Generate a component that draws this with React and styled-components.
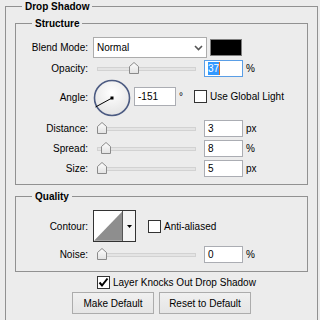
import styled, { createGlobalStyle } from "styled-components";

const GlobalStyle = createGlobalStyle`
  body {
    margin: 0;
    background: #ececec;
    font-family: "Liberation Sans", Arial, sans-serif;
    font-size: 10px;
    color: #000;
  }
`;

const Group = styled.fieldset`
  margin: ${(p) => p.$margin || "0"};
  padding: ${(p) => p.$padding || "0 8px"};
  border: 1px solid #919191;
  min-width: 0;
`;

const Legend = styled.legend`
  font-weight: bold;
  line-height: 13px;
  padding: 0 3px;
  margin-left: ${(p) => p.$indent || 8}px;
`;

const Row = styled.div`
  display: flex;
  align-items: center;
  height: ${(p) => p.$h || 20}px;
  margin-top: ${(p) => p.$top || 0}px;
`;

const Label = styled.div`
  width: 64px;
  flex: none;
  text-align: right;
  margin-right: 5px;
  margin-top: ${(p) => p.$top || 0}px;
`;

const Select = styled.div`
  width: 114px;
  height: 21px;
  box-sizing: border-box;
  background: #fff;
  border: 1px solid #acacac;
  display: flex;
  align-items: center;
  justify-content: space-between;
  padding: 0 3px 0 3px;
`;

const Swatch = styled.div`
  width: 32px;
  height: 17px;
  box-sizing: border-box;
  margin-left: 3px;
  background: #000;
  border: 1px solid #7f7f7f;
`;

const Slider = styled.div`
  position: relative;
  width: 99px;
  height: 12px;
  margin: 0 8px 0 4px;
  flex: none;
`;

const Track = styled.div`
  margin-top: 5px;
  height: 4px;
  box-sizing: border-box;
  background: #e4e4e4;
  border: 1px solid #d2d2d2;
`;

const Thumb = styled.svg`
  position: absolute;
  top: 0;
  left: ${(p) => p.$at}px;
`;

const Field = styled.div`
  width: ${(p) => p.$w || 39}px;
  height: ${(p) => p.$h || 17}px;
  box-sizing: border-box;
  background: #fff;
  border: 1px solid ${(p) => (p.$focus ? "#5a9ee6" : "#abadb3")};
  padding-left: 3px;
  display: flex;
  align-items: center;
  flex: none;
`;

const Selected = styled.span`
  background: #3399ff;
  color: #fff;
  line-height: 13px;
`;

const Caret = styled.span`
  width: 1px;
  height: 13px;
  background: #e07020;
`;

const Unit = styled.span`
  margin-left: 3px;
`;

const Box = styled.div`
  width: 13px;
  height: 13px;
  box-sizing: border-box;
  background: #fff;
  border: 1px solid #333;
  flex: none;
  margin-right: 3px;
  display: flex;
  align-items: center;
  justify-content: center;
`;

const AngleRow = styled(Row)`
  align-items: flex-start;
`;

const Dial = styled.svg`
  margin-top: 1px;
  margin-right: 3px;
  flex: none;
`;

const AngleSide = styled.div`
  display: flex;
  align-items: center;
  margin-top: 9px;
`;

const Check = styled.div`
  display: flex;
  align-items: center;
  margin-left: ${(p) => p.$gap || 0}px;
`;

const Contour = styled.div`
  width: 43px;
  height: 32px;
  box-sizing: border-box;
  border: 1px solid #333;
  background: #fff;
  display: flex;
  margin-right: 12px;
`;

const ContourArrow = styled.div`
  width: 12px;
  border-left: 1px solid #555;
  display: flex;
  align-items: center;
  justify-content: center;
  background: #f4f4f4;
`;

const Footer = styled.div`
  display: flex;
  align-items: center;
  height: 13px;
  margin-top: 4px;
  padding-left: 82px;
`;

const Buttons = styled.div`
  display: flex;
  justify-content: center;
  gap: 5px;
  margin-top: 3px;
  padding-bottom: 10px;
`;

const Button = styled.button`
  font: inherit;
  height: 22px;
  width: ${(p) => p.$w}px;
  border: 1px solid #acacac;
  background: linear-gradient(#f0f0f0, #e5e5e5);
  color: #000;
  padding: 0;
`;

function SliderRow({ label, value, unit, at, focus, top }) {
  return (
    <Row $top={top}>
      <Label>{label}</Label>
      <Slider>
        <Track />
        <Thumb $at={at} width="10" height="12" viewBox="0 0 10 12">
          <defs>
            <linearGradient id="tg" x1="0" y1="0" x2="0" y2="1">
              <stop offset="0" stopColor="#fdfdfd" />
              <stop offset="1" stopColor="#e2e2e2" />
            </linearGradient>
          </defs>
          <path d="M0.5 11.5V4.5L5 0.5L9.5 4.5V11.5Z" fill="url(#tg)" stroke="#8a8a8a" />
        </Thumb>
      </Slider>
      <Field $focus={focus}>
        {focus ? (
          <>
            <Selected>{value}</Selected>
            <Caret />
          </>
        ) : (
          value
        )}
      </Field>
      <Unit>{unit}</Unit>
    </Row>
  );
}

function Tick() {
  return (
    <svg width="11" height="11" viewBox="0 0 11 11">
      <path d="M1.5 5.5L4 8.5L9.5 1.5" fill="none" stroke="#000" strokeWidth="2" />
    </svg>
  );
}

export default function App() {
  return (
    <>
      <GlobalStyle />
      <Group $margin="0 2px 0 5px" $padding="4px 9px 0 9px">
        <Legend $indent={7}>Drop Shadow</Legend>
        <Group $padding="7px 8px 6px 8px">
          <Legend>Structure</Legend>
          <Row $h={21}>
            <Label>Blend Mode:</Label>
            <Select>
              Normal
              <svg width="9" height="6" viewBox="0 0 9 6">
                <path d="M1 1L4.5 4.5L8 1" fill="none" stroke="#555" strokeWidth="1.6" />
              </svg>
            </Select>
            <Swatch />
          </Row>
          <SliderRow label="Opacity:" value="37" unit="%" at={32} focus />
          <AngleRow $h={40}>
            <Label $top={14}>Angle:</Label>
            <Dial width="38" height="38" viewBox="0 0 38 38">
              <defs>
                <radialGradient id="dg" cx="0.5" cy="0.35" r="0.6">
                  <stop offset="0" stopColor="#ffffff" />
                  <stop offset="1" stopColor="#e6e6e6" />
                </radialGradient>
              </defs>
              <circle cx="19" cy="19" r="17.5" fill="url(#dg)" stroke="#4c5b82" strokeWidth="1.6" />
              <line x1="19" y1="19" x2="2.5" y2="28" stroke="#000" strokeWidth="1" />
              <rect x="17.5" y="17.5" width="3" height="3" fill="#000" />
            </Dial>
            <AngleSide>
              <Field $w={42} $h={19}>-151</Field>
              <Unit>°</Unit>
              <Check $gap={11}>
                <Box />
                Use Global Light
              </Check>
            </AngleSide>
          </AngleRow>
          <SliderRow label="Distance:" value="3" unit="px" at={0} />
          <SliderRow label="Spread:" value="8" unit="%" at={4} />
          <SliderRow label="Size:" value="5" unit="px" at={0} />
        </Group>
        <Group $margin="5px 0 0 0" $padding="7px 8px 7px 8px">
          <Legend>Quality</Legend>
          <Row $h={32}>
            <Label>Contour:</Label>
            <Contour>
              <svg width="29" height="30" viewBox="0 0 29 30">
                <path d="M0 30L29 0V30Z" fill="#8e8e8e" />
              </svg>
              <ContourArrow>
                <svg width="5" height="3" viewBox="0 0 5 3">
                  <path d="M0 0H5L2.5 3Z" fill="#000" />
                </svg>
              </ContourArrow>
            </Contour>
            <Check>
              <Box />
              Anti-aliased
            </Check>
          </Row>
          <SliderRow label="Noise:" value="0" unit="%" at={0} top={2} />
        </Group>
        <Footer>
          <Box>
            <Tick />
          </Box>
          Layer Knocks Out Drop Shadow
        </Footer>
        <Buttons>
          <Button $w={82}>Make Default</Button>
          <Button $w={92}>Reset to Default</Button>
        </Buttons>
      </Group>
    </>
  );
}
